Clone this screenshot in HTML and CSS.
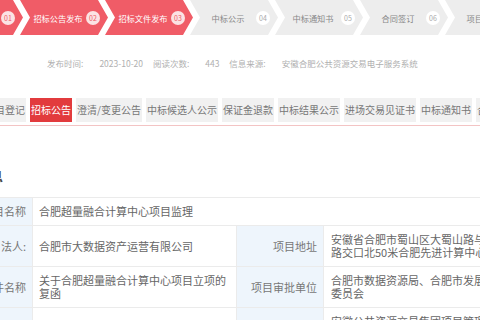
FILE: index.html
```html
<!DOCTYPE html>
<html lang="zh-CN">
<head>
  <meta charset="UTF-8" />
  <meta name="viewport" content="width=device-width, initial-scale=1.0"/>
  <title>招标公告 | 项目详情</title>
  <link rel="stylesheet" href="styles.css">
</head>
<body>

  <div class="steps">
    <div class="step done"><span class="step-name">项目登记</span><span class="step-num">01</span></div>
    <div class="step done"><span class="step-name">招标公告发布</span><span class="step-num">02</span></div>
    <div class="step done"><span class="step-name">招标文件发布</span><span class="step-num">03</span></div>
    <div class="step"><span class="step-name">中标公示</span><span class="step-num">04</span></div>
    <div class="step"><span class="step-name">中标通知书</span><span class="step-num">05</span></div>
    <div class="step"><span class="step-name">合同签订</span><span class="step-num">06</span></div>
    <div class="step"><span class="step-name">项目归档</span><span class="step-num">07</span></div>
  </div>

  <p class="meta">
    <span class="meta-label">发布时间:</span><span class="meta-value">2023-10-20</span>
    <span class="meta-label">阅读次数:</span><span class="meta-value">443</span>
    <span class="meta-label">信息来源:</span><span class="meta-value">安徽合肥公共资源交易电子服务系统</span>
  </p>

  <div class="tabs">
    <span class="tab">项目登记</span>
    <span class="tab active">招标公告</span>
    <span class="tab">澄清/变更公告</span>
    <span class="tab">中标候选人公示</span>
    <span class="tab">保证金退款</span>
    <span class="tab">中标结果公示</span>
    <span class="tab">进场交易见证书</span>
    <span class="tab">中标通知书</span>
    <span class="tab">合同签订</span>
  </div>

  <h3 class="section-title">基本信息</h3>

  <table class="info">
    <colgroup>
      <col class="c-label">
      <col class="c-value">
      <col class="c-label2">
      <col class="c-value2">
    </colgroup>
    <tr>
      <td class="label">项目名称</td>
      <td colspan="3">合肥超量融合计算中心项目监理</td>
    </tr>
    <tr>
      <td class="label">项目法人:</td>
      <td>合肥市大数据资产运营有限公司</td>
      <td class="label">项目地址</td>
      <td>安徽省合肥市蜀山区大蜀山路与长江西路交口北50米合肥先进计算中心</td>
    </tr>
    <tr>
      <td class="label">批复文件名称</td>
      <td>关于合肥超量融合计算中心项目立项的复函</td>
      <td class="label">项目审批单位</td>
      <td>合肥市数据资源局、合肥市发展和改革委员会</td>
    </tr>
    <tr>
      <td class="label">监督部门</td>
      <td>合肥市公共资源交易监督管理局</td>
      <td class="label">招标代理机构</td>
      <td>安徽公共资源交易集团项目管理有限公司</td>
    </tr>
  </table>

</body>
</html>
```

FILE: styles.css
```css
html, body {
  overflow: hidden;
}

body {
  margin: 0;
  background: #fff;
  font-family: "Noto Sans CJK SC", "Noto Sans", sans-serif;
  color: #666;
}

/* progress steps */
.steps {
  display: flex;
  height: 35px;
  margin-left: -65px;
}

.step {
  flex: 0 0 88px;
  margin-right: -3px;
  box-sizing: border-box;
  display: flex;
  align-items: center;
  padding: 0 8px 0 10px;
  background: #ededed;
  color: #888;
  font-size: 8.2px;
  clip-path: polygon(0 0, 78px 0, 88px 50%, 78px 100%, 0 100%, 10px 50%);
}

.step.done {
  background: #f05c67;
  color: #fff;
}

.step-name {
  flex: 1;
  text-align: center;
  white-space: nowrap;
}

.step-num {
  width: 14px;
  height: 14px;
  border-radius: 50%;
  background: #fff;
  color: #aaa;
  font-size: 7px;
  display: flex;
  align-items: center;
  justify-content: center;
}

.step.done .step-num {
  background: #fbe3e4;
  color: #f05c67;
}

/* meta line */
.meta {
  margin: 22px 0 0 47px;
  font-size: 8.5px;
  line-height: 12px;
  color: #b0b0b0;
  white-space: nowrap;
}

.meta-label {
  margin-right: 16px;
}

.meta-value {
  margin-right: 8px;
}

/* tabs */
.tabs {
  display: flex;
  gap: 4px;
  margin: 29px 0 0 -16px;
  padding-bottom: 3px;
  border-bottom: 1px solid #f3c4c4;
}

.tab {
  flex: none;
  height: 24px;
  line-height: 24px;
  padding: 0 1px;
  font-size: 10px;
  background: #f1f1f1;
  color: #777;
  white-space: nowrap;
}

.tab.active {
  background: #e23b3d;
  color: #fff;
}

.section-title {
  margin: 42px 0 0 -49px;
  font-size: 13px;
  line-height: 16px;
  color: #444;
}

/* info table */
.info {
  margin: 13px 0 0 -58px;
  border-collapse: collapse;
  table-layout: fixed;
  width: 587px;
  font-size: 11px;
  line-height: 13px;
}

.c-label { width: 90px; }
.c-value { width: 204px; }
.c-label2 { width: 87px; }
.c-value2 { width: 206px; }

.info td {
  border: 1px solid #ebebeb;
  padding: 7px 8px 7px 6px;
  vertical-align: middle;
  color: #666;
}

.info td:nth-child(4) {
  padding-left: 7px;
}

.info td.label {
  background: #eef5fc;
  text-align: right;
  color: #777;
  padding-right: 6px;
  white-space: nowrap;
}
```
